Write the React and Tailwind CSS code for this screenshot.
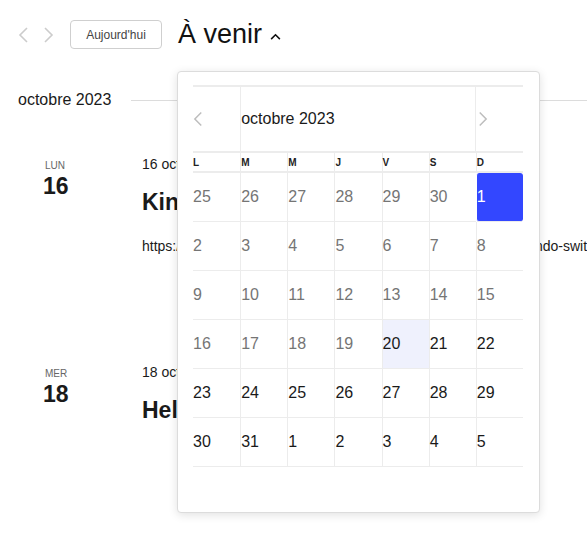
import React from 'react';

const font = { fontFamily: '"Liberation Sans", Arial, sans-serif' };

const dows = ['L', 'M', 'M', 'J', 'V', 'S', 'D'];

const weeks = [
  [25, 26, 27, 28, 29, 30, 1],
  [2, 3, 4, 5, 6, 7, 8],
  [9, 10, 11, 12, 13, 14, 15],
  [16, 17, 18, 19, 20, 21, 22],
  [23, 24, 25, 26, 27, 28, 29],
  [30, 31, 1, 2, 3, 4, 5],
];

function Chevron({ dir, className }) {
  return (
    <svg viewBox="0 0 12 16" className={className} fill="none" stroke="currentColor" strokeWidth="1.6">
      {dir === 'left' ? <path d="M9 1 L2 8 L9 15" /> : <path d="M3 1 L10 8 L3 15" />}
    </svg>
  );
}

function DayCell({ n, w, c }) {
  const selected = w === 0 && c === 6;
  const today = w === 3 && c === 4;
  const past = w < 3 || (w === 3 && c < 4);
  let cls = 'h-[49px] flex items-center text-[16px] border-b border-[#ececec]';
  if (c > 0) cls += ' border-l';
  if (selected) cls += ' bg-[#3347ff] text-white rounded-[3px] border-l-white';
  else if (today) cls += ' bg-[#eff1fd] text-[#1a1a1a]';
  else if (past) cls += ' text-[#757575]';
  else cls += ' text-[#1a1a1a]';
  return <div className={cls}>{n}</div>;
}

function Popover() {
  return (
    <div className="absolute left-[177px] top-[71px] w-[363px] h-[442px] bg-white border border-[#dcdcdc] rounded-[4px] shadow-[0_2px_10px_rgba(0,0,0,0.12)] pt-[13px] pl-[15px]">
      <div className="w-[330px]">
        <div className="grid grid-cols-7 border-t-2 border-b-2 border-[#ececec] h-[68px]">
          <div className="flex items-center text-[#bdbdbd]">
            <Chevron dir="left" className="w-[11px] h-[16px]" />
          </div>
          <div className="col-span-5 flex items-center border-l border-r border-[#ececec] text-[16px] text-[#1a1a1a]">octobre 2023</div>
          <div className="flex items-center pl-[1px] text-[#bdbdbd]">
            <Chevron dir="right" className="w-[11px] h-[16px]" />
          </div>
        </div>
        <div className="grid grid-cols-7 h-[20px] border-b-2 border-[#ececec]">
          {dows.map((d, i) => (
            <div key={i} className={`flex items-center text-[10px] font-bold text-[#222] ${i > 0 ? 'border-l border-[#ececec]' : ''}`}>{d}</div>
          ))}
        </div>
        <div className="grid grid-cols-7">
          {weeks.map((wk, w) => wk.map((n, c) => <DayCell key={`${w}-${c}`} n={n} w={w} c={c} />))}
        </div>
      </div>
    </div>
  );
}

function Event({ dow, day, date, title, link }) {
  return (
    <div className="flex">
      <div className="w-[142px] flex flex-col items-start pl-[43px] pt-[4px]">
        <div className="text-[10px] text-[#666] leading-none pl-[2px]">{dow}</div>
        <div className="text-[23px] font-bold text-[#1a1a1a] leading-none mt-[4px]">{day}</div>
      </div>
      <div className="flex-1 min-w-0">
        <div className="text-[14px] text-[#1a1a1a] leading-none">{date}</div>
        <div className="text-[23px] font-bold text-[#1a1a1a] leading-none mt-[20px] whitespace-nowrap">{title}</div>
        {link && <div className="text-[14px] text-[#1a1a1a] leading-none mt-[25px] whitespace-nowrap">{link}</div>}
      </div>
    </div>
  );
}

export default function App() {
  return (
    <div className="relative w-[587px] h-[541px] bg-white overflow-hidden" style={font}>
      <div className="flex items-center pt-[20px] pl-[18px]">
        <div className="flex items-center gap-[12px] text-[#cccccc]">
          <Chevron dir="left" className="w-[12px] h-[16px]" />
          <Chevron dir="right" className="w-[12px] h-[16px]" />
        </div>
        <button className="ml-[16px] w-[92px] h-[29px] border border-[#cfcfcf] rounded-[4px] text-[12px] text-[#444]">Aujourd'hui</button>
        <div className="ml-[16px] text-[27px] text-[#111] leading-none">À venir</div>
        <svg viewBox="0 0 12 8" className="ml-[8px] mt-[4px] w-[11px] h-[7px]" fill="none" stroke="#111" strokeWidth="1.8">
          <path d="M1 7 L6 2 L11 7" />
        </svg>
      </div>

      <div className="flex items-center mt-[43px] pl-[18px]">
        <div className="text-[16px] text-[#1a1a1a] leading-none">octobre 2023</div>
        <div className="flex-1 h-px bg-[#dcdcdc] ml-[20px]"></div>
      </div>

      <div className="mt-[49px]">
        <Event
          dow="LUN"
          day="16"
          date="16 octobre 2023"
          title="Kingdom Hearts"
          link="https://www.nintendo.com/fr-fr/Jeux/Jeux-Nintendo-Switch/nintendo-switch"
        />
      </div>
      <div className="mt-[112px]">
        <Event dow="MER" day="18" date="18 octobre 2023" title="Hello Kitty" />
      </div>

      <Popover />
    </div>
  );
}
